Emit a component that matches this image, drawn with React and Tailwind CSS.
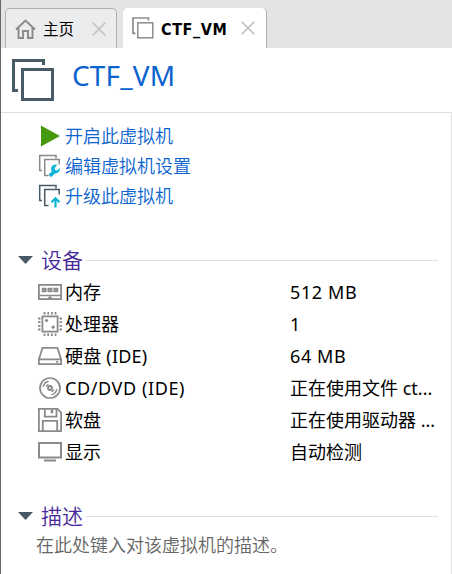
import React from "react";

const G = "#8a8a8a";

function LargeVmIcon() {
  return (
    <svg className="shrink-0" width="42" height="42" viewBox="0 0 42 42" fill="none" stroke="#495a67" strokeWidth="3" shapeRendering="crispEdges">
      <path d="M6 31.5H1.5V1.5H31.5V6" />
      <rect x="10.5" y="10.5" width="30" height="30" />
    </svg>
  );
}

function SmallVmIcon() {
  return (
    <svg className="shrink-0" width="22" height="22" viewBox="0 0 22 22" fill="none" stroke="#8c8c8c">
      <path d="M3.500 16.300H1V1H16.500V3.500" strokeWidth="1.700" />
      <rect x="5.800" y="5.800" width="15" height="15" strokeWidth="1.500" />
    </svg>
  );
}

function Close() {
  return (
    <svg className="shrink-0" width="14" height="14" viewBox="0 0 14 14" stroke="#c5c6c7" strokeWidth="1.9">
      <path d="M.7.7l12.6 12.6M13.3.7L.7 13.3" />
    </svg>
  );
}

function StackIcon({ color, children }) {
  return (
    <svg width="24" height="24" viewBox="0 0 24 24" fill="none">
      <path d="M6 16.500H3.700V1.500H20V4.500" stroke={color} strokeWidth="1.5" />
      <path d="M12.500 21.500H8.700V5.500H23.200V10.500" stroke={color} strokeWidth="1.5" />
      {children}
    </svg>
  );
}

const icons = {
  play: (
    <svg width="24" height="24" viewBox="0 0 24 24">
      <path d="M5 1.500L24 12L5 22.500Z" fill="#459a0d" />
    </svg>
  ),
  edit: (
    <StackIcon color="#8a8a8a">
      <path d="M13.800 22l5.500-5.500" stroke="#12b5d5" strokeWidth="3.600" />
      <path d="M21.300 10.800a4.500 4.500 0 1 0 2.500 5.500l.2-2.200-2.900 2.300-2-.4-.4-2z" fill="#12b5d5" />
    </StackIcon>
  ),
  upgrade: (
    <StackIcon color="#495a67">
      <path d="M19.500 23.500V14.500M15.500 18.300l4-4 4 4" stroke="#12b5d5" strokeWidth="2.200" />
    </StackIcon>
  ),
  memory: (
    <svg width="24" height="24" viewBox="0 0 24 24" fill="none" stroke={G}>
      <rect x=".9" y="4.900" width="22.200" height="14.200" strokeWidth="1.800" />
      <path d="M4.700 8.700h3v2.600h-3zM10.500 8.700h3v2.600h-3zM16.300 8.700h3v2.600h-3z" strokeWidth="1.900" />
      <path d="M1 15.500h22M9.500 19l2.500-2 2.500 2" strokeWidth="1.500" />
    </svg>
  ),
  cpu: (
    <svg width="24" height="24" viewBox="0 0 24 24" fill="none" stroke={G}>
      <rect x="4.400" y="4.400" width="15.200" height="15.200" strokeWidth="1.800" />
      <path d="M6.500 0v2.500M10.200 0v2.500M13.900 0v2.500M17.500 0v2.500M6.500 21.500V24M10.200 21.500V24M13.900 21.500V24M17.500 21.500V24M0 6.500h2.500M0 10.200h2.500M0 13.900h2.500M0 17.500h2.500M21.500 6.500H24M21.500 10.200H24M21.500 13.900H24M21.500 17.500H24" strokeWidth="1.800" />
      <circle cx="8.500" cy="8.500" r="1.600" fill={G} stroke="none" />
      <circle cx="15.200" cy="15.200" r="1.600" fill={G} stroke="none" />
    </svg>
  ),
  disk: (
    <svg width="24" height="24" viewBox="0 0 24 24" fill="none" stroke={G} strokeWidth="1.800">
      <path d="M.9 15.300L4.500 3.800h15l3.600 11.500v4.900H.9zM.9 15.300h22.200" />
      <path d="M18.200 17.800h2" />
    </svg>
  ),
  cd: (
    <svg width="24" height="24" viewBox="0 0 24 24" fill="none" stroke={G} strokeWidth="1.700">
      <circle cx="12" cy="12" r="10" />
      <circle cx="12" cy="12" r="1.900" strokeWidth="2" />
      <path d="M5.200 10.800a7 7 0 0 1 5.400-5.600M8.200 10.600a4 4 0 0 1 2.300-2.300M18.800 13.200a7 7 0 0 1-5.400 5.600M15.800 13.400a4 4 0 0 1-2.300 2.300" strokeWidth="1.400" />
    </svg>
  ),
  floppy: (
    <svg width="24" height="24" viewBox="0 0 24 24" fill="none" stroke={G} strokeWidth="1.800">
      <path d="M.9.9h18.600l3.600 3.700v18.500H.9z" />
      <path d="M6.800 1v7.700h11.700V1M4.800 23V12.800h14.400V23" />
      <path d="M14 1.500v3.800" strokeWidth="2.500" />
    </svg>
  ),
  display: (
    <svg width="24" height="24" viewBox="0 0 24 24" fill="none" stroke={G} strokeWidth="2">
      <path d="M1 3h22v14.500H1zM6 20.500h12" />
    </svg>
  ),
};

const links = [
  ["play", "开启此虚拟机"],
  ["edit", "编辑虚拟机设置"],
  ["upgrade", "升级此虚拟机"],
];
const devices = [
  ["memory", "内存", "512 MB"],
  ["cpu", "处理器", "1"],
  ["disk", "硬盘 (IDE)", "64 MB"],
  ["cd", "CD/DVD (IDE)", "正在使用文件 ct..."],
  ["floppy", "软盘", "正在使用驱动器 ..."],
  ["display", "显示", "自动检测"],
];

function labelTracking(text) {
  if (text.startsWith("CD/")) return "tracking-[0.6px]";
  if (text.endsWith("MB")) return "tracking-[0.6px]";
  if (text.endsWith("(IDE)")) return "tracking-[0.2px]";
  return "tracking-normal";
}

function Heading({ children }) {
  return (
    <div className="flex h-8 items-center pl-[17px] pr-[13px]">
      <svg width="15" height="8" viewBox="0 0 15 8">
        <path d="M0 0h15L7.500 8z" fill="#495a67" />
      </svg>
      <h2 className="ml-2 mr-px w-[44px] whitespace-nowrap text-[21px] font-[350] leading-8 text-[#46289b]">{children}</h2>
      <div className="h-px flex-1 bg-[#e0e0e0]" />
    </div>
  );
}

export default function App() {
  return (
    <div className="flex h-[574px] w-[452px] flex-col overflow-hidden border-l border-[#666] bg-white font-['Noto_Sans','Noto_Sans_CJK_SC',sans-serif] text-black">
      <div className="flex h-12 shrink-0 items-end bg-[#e3e4e6] pl-1">
        <div className="flex h-10 w-[112px] items-center rounded-t-[5px] border border-b-0 border-[#afb0b2] bg-[#ebecee] pl-[9px]">
          <svg className="shrink-0" width="21" height="20" viewBox="0 0 21 20" fill="none" stroke="#8a8a8a" strokeWidth="1.9">
            <path d="M1 10.5L10.5 1.500L20 10.500M3.500 9v10H8v-7h5v7h4.500V9" />
          </svg>
          <span className="ml-[7px] w-[33px] whitespace-nowrap text-[15.500px] leading-5">主页</span>
          <span className="ml-4 flex"><Close /></span>
        </div>
        <div className="ml-1.5 flex h-10 w-36 items-center rounded-t-[5px] border-r border-[#afb0b2] bg-white pl-[9px]">
          <SmallVmIcon />
          <span className="ml-[7px] mt-[3px] w-[67px] whitespace-nowrap font-['DejaVu_Sans_Condensed','DejaVu_Sans',sans-serif] text-base font-bold leading-5 tracking-[0.6px]">CTF_VM</span>
          <span className="ml-[13px] flex"><Close /></span>
        </div>
      </div>
      <header className="flex h-16 shrink-0 items-start pl-[11px] pt-[11px]">
        <LargeVmIcon />
        <h1 className="-mt-px ml-[18px] whitespace-nowrap font-['Noto_Sans',sans-serif] text-[28px] leading-[34px] tracking-[0.15px] text-[#0a63ce]">CTF_VM</h1>
      </header>
      <main className="flex flex-1 flex-col border-r border-t border-[#e0e0e0] pt-2">
        <ul className="pl-[35px]">
          {links.map(([icon, label]) => (
            <li key={icon} className="flex h-[30px] items-center text-lg leading-[30px] text-[#0a63ce]">
              {icons[icon]}
              <a className="ml-[5px] whitespace-nowrap font-[350]">{label}</a>
            </li>
          ))}
        </ul>
        <div className="mt-[33px]">
          <Heading>设备</Heading>
          <ul className="pl-[37px]">
            {devices.map(([icon, label, value]) => (
              <li key={icon} className="flex h-8 items-center text-lg leading-8">
                {icons[icon]}
                <span className={`ml-[3px] w-[225px] whitespace-nowrap ${labelTracking(label)}`}>{label}</span>
                <span className={`whitespace-nowrap ${labelTracking(value)}`}>{value}</span>
              </li>
            ))}
          </ul>
        </div>
        <div className="mt-8">
          <Heading>描述</Heading>
          <p className="whitespace-nowrap pl-[35px] text-lg font-[350] leading-[26px] text-[#666]">在此处键入对该虚拟机的描述。</p>
        </div>
      </main>
    </div>
  );
}
